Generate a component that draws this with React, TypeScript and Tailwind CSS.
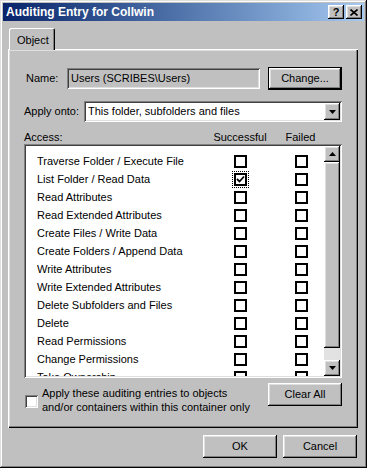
const raised =
  'shadow-[inset_-1px_-1px_#000,inset_1px_1px_#fff,inset_-2px_-2px_#808080,inset_2px_2px_#dfdfdf]';
const sunken =
  'shadow-[inset_1px_1px_#808080,inset_-1px_-1px_#fff,inset_2px_2px_#404040,inset_-2px_-2px_#dfdfdf]';

const rows = [
  'Traverse Folder / Execute File',
  'List Folder / Read Data',
  'Read Attributes',
  'Read Extended Attributes',
  'Create Files / Write Data',
  'Create Folders / Append Data',
  'Write Attributes',
  'Write Extended Attributes',
  'Delete Subfolders and Files',
  'Delete',
  'Read Permissions',
  'Change Permissions',
  'Take Ownership',
];

function Box({ checked, focus }: { checked?: boolean; focus?: boolean }) {
  return (
    <div className={`w-[13px] h-[13px] flex items-center justify-center ${focus ? 'outline outline-1 outline-dotted outline-black outline-offset-[1px]' : ''}`}>
      <div className="w-[13px] h-[13px] border-2 border-black bg-white flex items-center justify-center">
        {checked && (
          <svg width="9" height="9" viewBox="0 0 9 9">
            <path d="M1 4 L3.5 6.5 L8 1.5" stroke="#000" strokeWidth="1.8" fill="none" />
          </svg>
        )}
      </div>
    </div>
  );
}

function Arrow({ up }: { up?: boolean }) {
  return (
    <svg width="7" height="4" viewBox="0 0 7 4">
      <path d={up ? 'M3.5 0 L7 4 L0 4 Z' : 'M0 0 L7 0 L3.5 4 Z'} fill="#000" />
    </svg>
  );
}

function Btn({ label, w, def }: { label: string; w: string; def?: boolean }) {
  return (
    <div className={`${w} h-[23px] ${def ? 'border border-black' : ''} bg-[#c0c0c0]`}>
      <div className={`w-full h-full ${raised} flex items-center justify-center`}>{label}</div>
    </div>
  );
}

export default function App() {
  return (
    <div
      className="w-[367px] h-[468px] bg-[#c0c0c0] p-[3px] flex flex-col text-[11px] text-black shadow-[inset_-1px_-1px_#000,inset_1px_1px_#dfdfdf,inset_-2px_-2px_#808080,inset_2px_2px_#fff]"
      style={{ fontFamily: '"Liberation Sans", Arial, sans-serif' }}
    >
      {/* Barra de título */}
      <div className="h-[18px] flex items-center justify-between pl-[3px] pr-[2px] bg-gradient-to-r from-[#0a246a] to-[#a6caf0]">
        <span className="text-white font-bold text-[12px]">Auditing Entry for Collwin</span>
        <div className="flex gap-[2px]">
          <div className={`w-[16px] h-[14px] ${raised} bg-[#c0c0c0] flex items-center justify-center font-bold text-[11px] leading-none`}>?</div>
          <div className={`w-[16px] h-[14px] ${raised} bg-[#c0c0c0] flex items-center justify-center`}>
            <svg width="8" height="7" viewBox="0 0 8 7">
              <path d="M0.5 0.5 L7.5 6.5 M7.5 0.5 L0.5 6.5" stroke="#000" strokeWidth="1.6" />
            </svg>
          </div>
        </div>
      </div>

      <div className="ml-[5px] mt-[7px] flex flex-col">
        {/* Pestaña */}
        <div className="ml-[1px] w-[46px] h-[22px] -mb-px relative z-10 bg-[#c0c0c0] rounded-t-[2px] shadow-[inset_1px_1px_#fff,inset_-1px_0_#000,inset_-2px_0_#808080] pl-[8px] pt-[4px]">
          Object
        </div>

        {/* Panel */}
        <div className="w-[350px] h-[379px] px-[16px] pt-[18px] flex flex-col shadow-[inset_1px_1px_#fff,inset_-1px_-1px_#000,inset_-2px_-2px_#808080,inset_2px_2px_#dfdfdf]">
          <div className="h-[22px] flex items-center">
            <span className="ml-[2px] w-[41px]">Name:</span>
            <div className={`w-[193px] h-[21px] ${sunken} flex items-center pl-[4px]`}>Users (SCRIBES\Users)</div>
            <div className="ml-[8px]">
              <Btn label="Change..." w="w-[74px]" def />
            </div>
          </div>

          <div className="mt-[12px] h-[21px] flex items-center">
            <span className="w-[60px]">Apply onto:</span>
            <div className={`w-[258px] h-[21px] ${sunken} bg-white flex items-center justify-between pl-[4px] pr-[2px]`}>
              <span>This folder, subfolders and files</span>
              <div className={`w-[16px] h-[17px] ${raised} bg-[#c0c0c0] flex items-center justify-center`}>
                <Arrow />
              </div>
            </div>
          </div>

          <div className="mt-[8px] h-[14px] flex items-center">
            <span className="w-[186px]">Access:</span>
            <span className="w-[60px] text-center">Successful</span>
            <span className="w-[61px] text-center">Failed</span>
          </div>

          {/* Lista */}
          <div className={`w-[318px] h-[234px] ${sunken} bg-white p-[2px] flex`}>
            <div className="flex-1 overflow-hidden pt-[6px]">
              {rows.map((r, i) => (
                <div key={r} className="h-[18px] flex items-center pl-[11px]">
                  <span className="w-[197px] whitespace-nowrap">{r}</span>
                  <Box checked={i === 1} focus={i === 1} />
                  <div className="w-[48px]" />
                  <Box />
                </div>
              ))}
            </div>
            <div className="w-[16px] flex flex-col">
              <div className={`h-[16px] ${raised} bg-[#c0c0c0] flex items-center justify-center`}>
                <Arrow up />
              </div>
              <div className={`h-[186px] ${raised} bg-[#c0c0c0]`} />
              <div className="flex-1 bg-[#e2e2e2]" />
              <div className={`h-[16px] ${raised} bg-[#c0c0c0] flex items-center justify-center`}>
                <Arrow />
              </div>
            </div>
          </div>

          <div className="mt-[5px] flex justify-between">
            <div className="flex items-start">
              <div className={`mt-[12px] ml-[1px] w-[13px] h-[13px] ${sunken} bg-white`} />
              <div className="ml-[4px] mt-[3px] leading-[14px]">
                Apply these auditing entries to objects
                <br />
                and/or containers within this container only
              </div>
            </div>
            <Btn label="Clear All" w="w-[74px]" />
          </div>
        </div>

        {/* Botones */}
        <div className="mt-[7px] w-[350px] flex justify-end gap-[6px] pr-[1px]">
          <Btn label="OK" w="w-[74px]" />
          <Btn label="Cancel" w="w-[74px]" />
        </div>
      </div>
    </div>
  );
}
